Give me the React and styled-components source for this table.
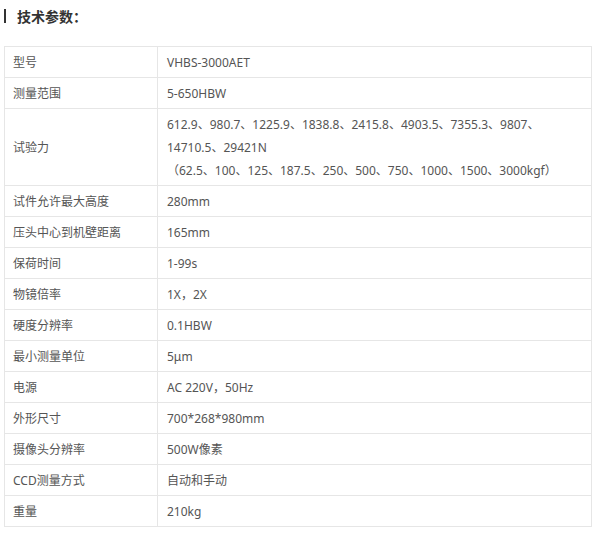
import React from "react";
import styled, { createGlobalStyle } from "styled-components";

const Global = createGlobalStyle`
  body {
    margin: 0;
    background: #fff;
    font-family: "Noto Sans", "Noto Sans CJK SC", sans-serif;
  }
`;

const Page = styled.div`
  padding: 5px 8px 0 4px;
  box-sizing: border-box;
  width: 600px;
`;

const Title = styled.h3`
  display: flex;
  align-items: center;
  gap: 11px;
  margin: 0;
  height: 22px;
  font-size: 14px;
  font-weight: 700;
  color: #333;
  &::before {
    content: "";
    width: 2px;
    height: 14px;
    background: #333;
  }
`;

const Table = styled.table`
  margin-top: 19px;
  width: 588px;
  border-collapse: collapse;
  font-size: 12px;
  color: #555;
  td {
    border: 1px solid #e6e6e6;
    padding: 4px 8px 3px;
    line-height: 23px;
    vertical-align: middle;
  }
  td:first-child {
    width: 136px;
  }
  td:last-child {
    padding-left: 9px;
  }
`;

const Line = styled.div`
  white-space: nowrap;
`;

const rows = [
  ["型号", "VHBS-3000AET"],
  ["测量范围", "5-650HBW"],
  [
    "试验力",
    [
      "612.9、980.7、1225.9、1838.8、2415.8、4903.5、7355.3、9807、",
      "14710.5、29421N",
      "（62.5、100、125、187.5、250、500、750、1000、1500、3000kgf）",
    ],
  ],
  ["试件允许最大高度", "280mm"],
  ["压头中心到机壁距离", "165mm"],
  ["保荷时间", "1-99s"],
  ["物镜倍率", "1X，2X"],
  ["硬度分辨率", "0.1HBW"],
  ["最小测量单位", "5μm"],
  ["电源", "AC 220V，50Hz"],
  ["外形尺寸", "700*268*980mm"],
  ["摄像头分辨率", "500W像素"],
  ["CCD测量方式", "自动和手动"],
  ["重量", "210kg"],
];

const App = () => {
  return (
    <>
      <Global />
      <Page>
        <Title>技术参数：</Title>
        <Table>
          <tbody>
            {rows.map(([name, value]) => (
              <tr key={name}>
                <td>{name}</td>
                <td>
                  {Array.isArray(value)
                    ? value.map((l) => <Line key={l}>{l}</Line>)
                    : value}
                </td>
              </tr>
            ))}
          </tbody>
        </Table>
      </Page>
    </>
  );
};

export default App;
